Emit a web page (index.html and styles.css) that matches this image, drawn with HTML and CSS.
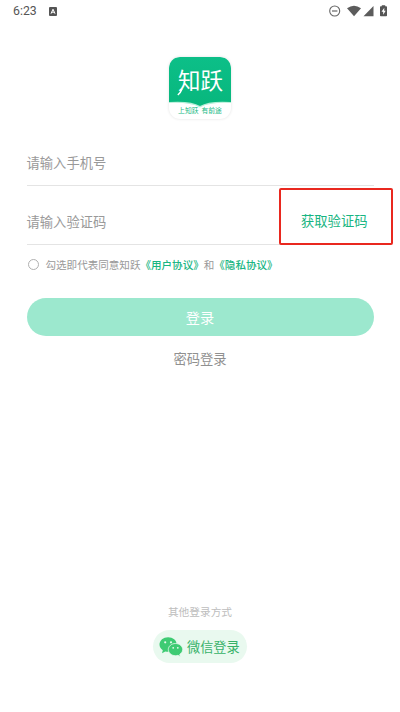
FILE: index.html
```
<!DOCTYPE html>
<html lang="zh-CN">
<head>
<meta charset="utf-8">
<title>登录</title>
<link rel="stylesheet" href="styles.css">
</head>
<body>
<div class="screen">
  <header class="status">
    <span class="time">6:23</span>
    <svg class="ime" width="8" height="9" viewBox="0 0 8 9"><rect width="8" height="9" rx="1" fill="#555"/><path d="M2 6.7 4 2.2l2 4.5M2.8 5.2h2.4" fill="none" stroke="#fff"/></svg>
    <svg class="signals" width="60" height="14" viewBox="0 0 60 14">
      <circle cx="6.7" cy="7" r="5" fill="none" stroke="#666" stroke-width="1.1"/>
      <path d="M4 7h5.4" stroke="#666" stroke-width="1.2"/>
      <path d="M19 4.2Q26 -.8 33 4.2L26 12.3Z" fill="#5c5c5c"/>
      <path d="M45.5 2v10.200H35.500Z" fill="#5c5c5c"/>
      <path d="M53.800 1.200h3.400v1h1q.8 0 .8.8v8.500q0 .8-.8.8h-5.400q-.8 0-.8-.8V3q0-.8.8-.8h1Z" fill="#555"/>
      <path d="M56.300 3.700 53.500 7.700h1.700v3l2.500-4h-1.500Z" fill="#fff"/>
    </svg>
  </header>

  <div class="logo">
    <svg class="cover" width="62" height="62" viewBox="0 0 62 62">
      <defs><linearGradient id="g" x1="0" y1="0" x2="0" y2="1"><stop offset="0" stop-color="#0cbf88"/><stop offset="1" stop-color="#08b77d"/></linearGradient></defs>
      <path d="M0 44Q22 43 31 48.500Q40 43 62 44V46Q41 45 31 50.500Q21 45 0 46Z" fill="#b5eed8"/>
      <path d="M0 11Q0 0 11 0H51Q62 0 62 11V45Q40 43.500 31 49Q22 43.500 0 45Z" fill="url(#g)"/>
    </svg>
    <span class="name">知跃</span>
    <svg class="tail" width="6" height="7" viewBox="0 0 6 7"><path d="M5 0Q3.500 4 .8 6" fill="none" stroke="#fff" stroke-width="1.500"/></svg>
    <span class="slogan"><span>上知跃</span><span>有前途</span></span>
  </div>

  <main class="form">
    <div class="field">请输入手机号</div>
    <div class="field code"><span>请输入验证码</span><span class="get">获取验证码</span><i class="highlight"></i></div>
    <div class="agree"><i class="radio"></i><span>勾选即代表同意知跃<b>《用户协议》</b>和<b>《隐私协议》</b></span></div>
    <div class="login">登录</div>
    <div class="password">密码登录</div>
  </main>

  <footer class="other">
    <div class="hint">其他登录方式</div>
    <div class="wechat">
      <svg width="24" height="20" viewBox="0 0 24 20">
        <path d="M9.100.3C4.300.3.500 3.500.500 7.500c0 2.400 1.300 4.400 3.300 5.700L3 16.200l3.300-1.800c.9.3 1.800.4 2.800.4 4.800 0 8.600-3.200 8.600-7.300S13.900.3 9.100.3Z" fill="#3ecb73"/>
        <path d="M16.500 6.500c-4 0-7.200 2.700-7.200 6.100s3.200 6.100 7.200 6.100c.8 0 1.700-.1 2.400-.4l2.400 1.300-.6-2.200c1.800-1.100 3-2.800 3-4.800 0-3.400-3.200-6.100-7.200-6.100Z" fill="#3ecb73" stroke="#e9f9ef" stroke-width=".8"/>
        <g fill="#e9f9ef"><circle cx="6.200" cy="5.300" r="1.100"/><circle cx="12" cy="5.300" r="1.100"/><circle cx="14.200" cy="10.800" r=".9"/><circle cx="18.800" cy="10.800" r=".9"/></g>
      </svg>
      <span>微信登录</span>
    </div>
  </footer>
</div>
</body>
</html>
```
FILE: styles.css
```
* { box-sizing: border-box; }
body {
  margin: 0;
  background: #fff;
  font-family: "Noto Sans CJK SC", sans-serif;
  color: #999;
}
.screen {
  width: 400px;
  height: 712px;
  display: flex;
  flex-direction: column;
  align-items: center;
  overflow: hidden;
}
svg { display: block; flex: none; }
.status {
  width: 100%;
  height: 22px;
  padding: 0 12px 0 13px;
  display: flex;
  align-items: center;
}
.time {
  width: 36px;
  font: 12.3px/22px Roboto, sans-serif;
  color: #555;
}
.signals { margin-left: auto; }
.logo {
  position: relative;
  width: 62px;
  height: 62px;
  margin-top: 35px;
  border-radius: 11px;
  background: #fff;
  box-shadow: 0 0 3px rgba(0, 0, 0, .12);
}
.cover { border-radius: 11px; }
.name {
  position: absolute;
  left: 9px;
  top: 8px;
  font-size: 22.500px;
  line-height: 28px;
  color: #fff;
  white-space: nowrap;
}
.tail { position: absolute; left: 8px; top: 32px; }
.slogan {
  position: absolute;
  left: 0;
  width: 100%;
  top: 48px;
  display: flex;
  justify-content: center;
  gap: 3px;
  font-size: 6.800px;
  line-height: 10px;
  color: #20b985;
}
.form {
  width: 347px;
  margin-top: 22px;
}
.field {
  height: 45px;
  display: flex;
  align-items: center;
  border-bottom: 1px solid #e4e4e4;
  font-size: 13.300px;
  line-height: 20px;
}
.code {
  position: relative;
  height: 59px;
  padding-top: 13px;
  justify-content: space-between;
}
.get { color: #18b582; margin: 0 6px 2px 0; }
.highlight {
  position: absolute;
  left: 252px;
  top: 2px;
  width: 114px;
  height: 57px;
  border: 2px solid #e9281f;
  border-radius: 2px;
}
.agree {
  display: flex;
  align-items: center;
  height: 16px;
  margin: 12px 0 0 1px;
  font-size: 10.550px;
  line-height: 16px;
  white-space: nowrap;
}
.radio {
  width: 11px;
  height: 11px;
  margin: 0 7px 1px 0;
  border: 1px solid #b0b0b0;
  border-radius: 50%;
}
.agree b { font-weight: 500; color: #18b582; }
.login {
  height: 38px;
  margin-top: 25px;
  border-radius: 19px;
  background: #9ce8ce;
  color: #fff;
  font-size: 14.200px;
  line-height: 38px;
  text-align: center;
}
.password {
  margin-top: 13px;
  font-size: 13.300px;
  line-height: 20px;
  text-align: center;
  color: #909090;
}
.other {
  margin: auto 0 49px;
  display: flex;
  flex-direction: column;
  align-items: center;
}
.hint {
  font-size: 10.700px;
  line-height: 16px;
  color: #bdbdbd;
}
.wechat {
  display: flex;
  align-items: center;
  gap: 4px;
  width: 94px;
  height: 33px;
  margin-top: 10px;
  padding-left: 6px;
  border-radius: 17px;
  background: #e9f9ef;
  color: #36b168;
  font-size: 13.200px;
  line-height: 20px;
  white-space: nowrap;
}
```
